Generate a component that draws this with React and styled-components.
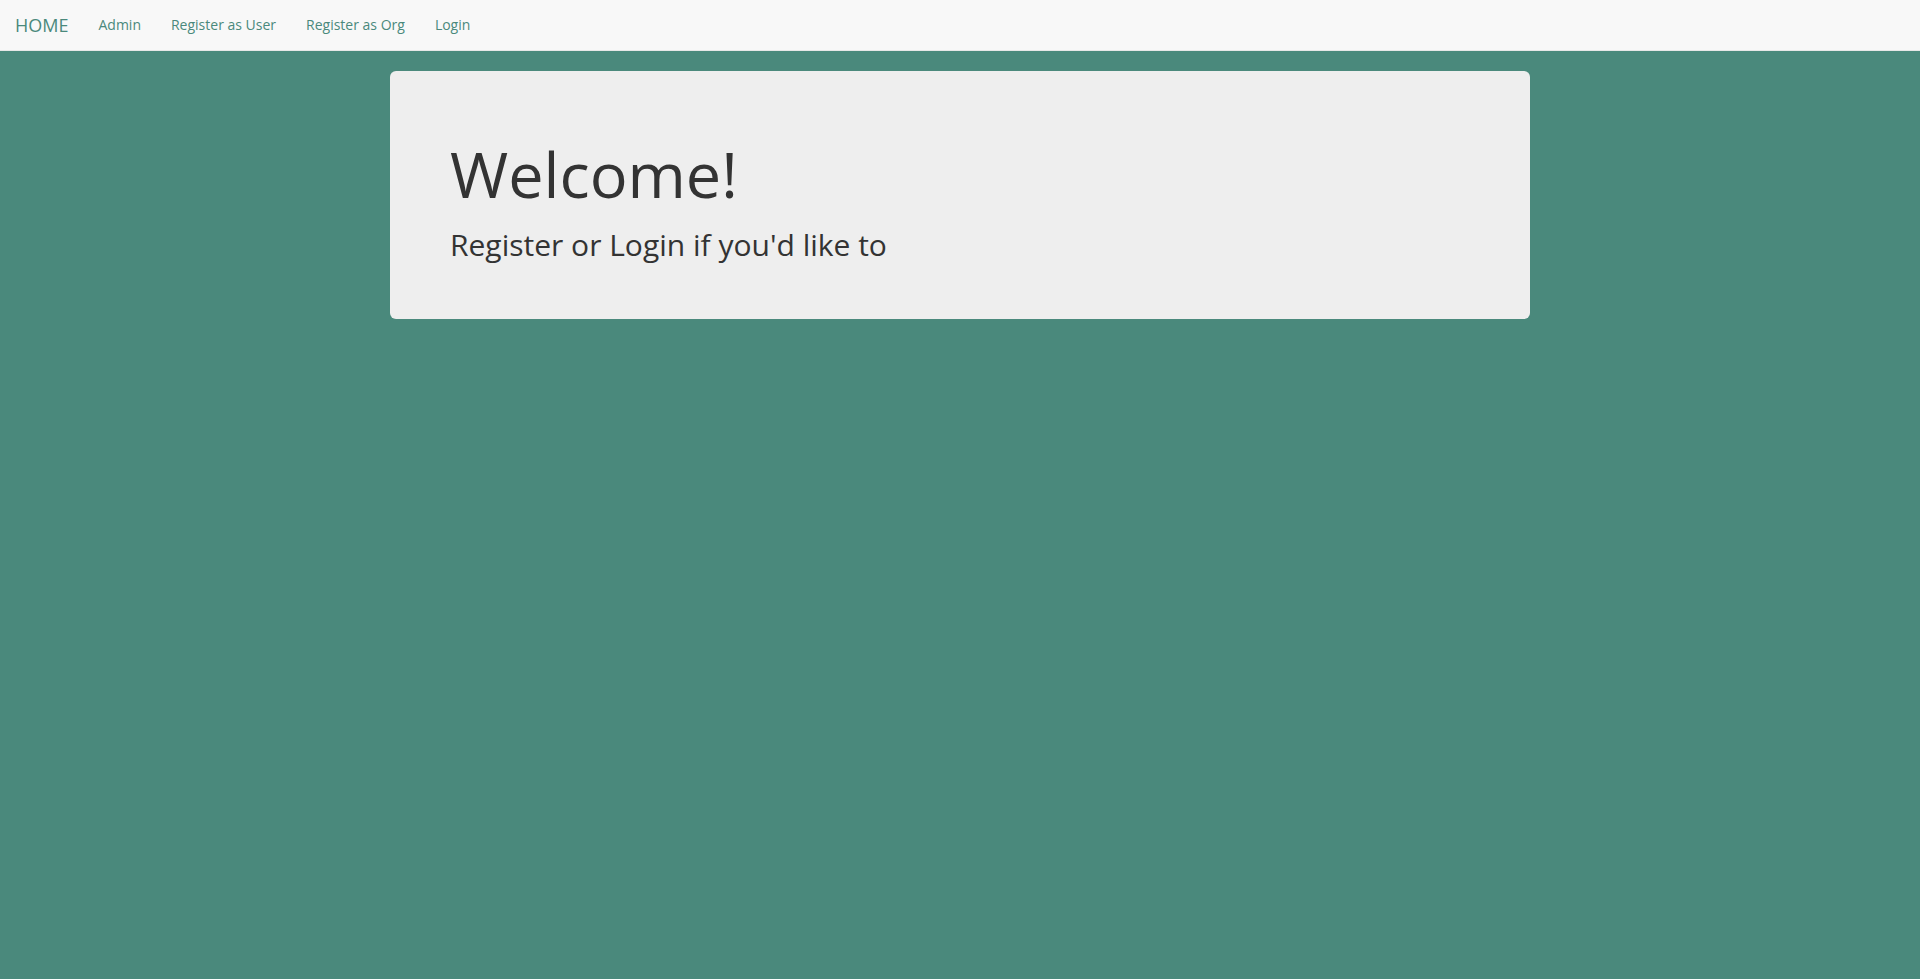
import React from 'react';
import styled, { createGlobalStyle } from 'styled-components';

const GlobalStyle = createGlobalStyle`
  * { box-sizing: border-box; }
  body {
    margin: 0;
    background: #4a897c;
    font-family: "Open Sans", "Liberation Sans", sans-serif;
    font-size: 14px;
    line-height: 1.42857;
    color: #333;
  }
`;

const Navbar = styled.nav`
  display: flex;
  align-items: center;
  height: 51px;
  background: #f8f8f8;
  border-bottom: 1px solid #e7e7e7;
  margin-bottom: 20px;
`;

const Brand = styled.a`
  padding: 15px;
  font-size: 18px;
  line-height: 20px;
  color: #4a897c;
  text-decoration: none;
`;

const NavLink = styled.a`
  padding: 15px;
  font-size: 14px;
  line-height: 20px;
  color: #4a897c;
  text-decoration: none;
`;

const Container = styled.div`
  width: 1170px;
  margin: 0 auto;
  padding: 0 15px;
`;

const Jumbotron = styled.div`
  background: #eeeeee;
  border-radius: 6px;
  padding: 48px 60px;
`;

const Heading = styled.h1`
  margin: 20px 0 10px;
  font-size: 63px;
  font-weight: 400;
  line-height: 1.1;
  color: #333;
`;

const Lead = styled.h2`
  margin: 20px 0 10px;
  font-size: 30px;
  font-weight: 400;
  line-height: 1.1;
  color: #333;
`;

const links = ['Admin', 'Register as User', 'Register as Org', 'Login'];

const App = () => {
  return (
    <>
      <GlobalStyle />
      <Navbar>
        <Brand href="#">HOME</Brand>
        {links.map((l) => (
          <NavLink key={l} href="#">{l}</NavLink>
        ))}
      </Navbar>
      <Container>
        <Jumbotron>
          <Heading>Welcome!</Heading>
          <Lead>Register or Login if you'd like to</Lead>
        </Jumbotron>
      </Container>
    </>
  );
};

export default App;
